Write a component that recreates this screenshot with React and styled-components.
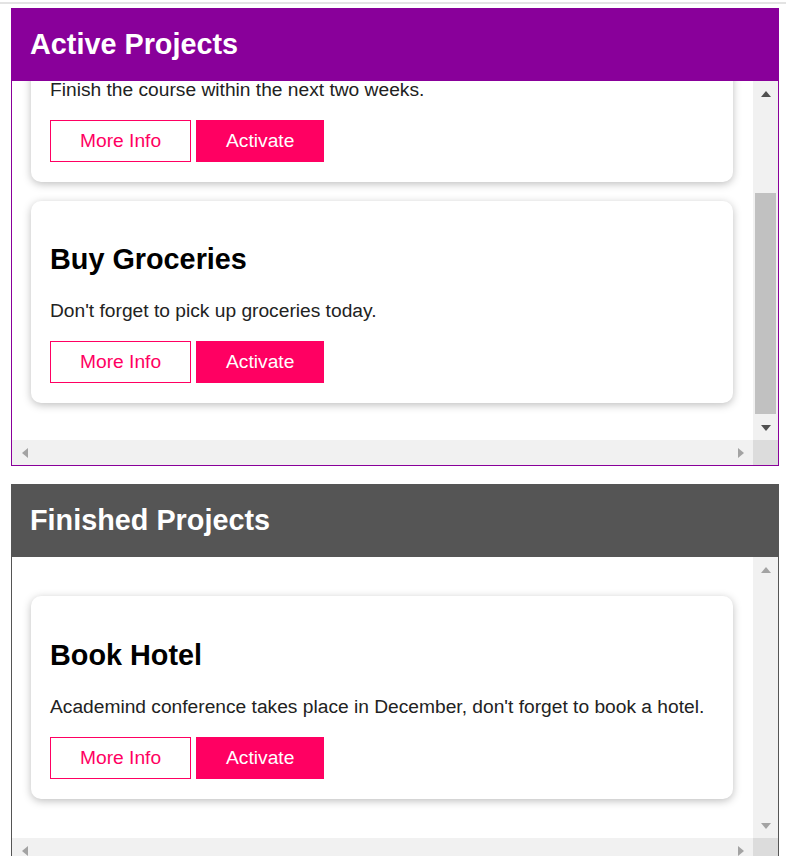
import React, { useLayoutEffect, useRef, useState } from "react";
import styled, { createGlobalStyle } from "styled-components";

const PINK = "#ff0062";

const projects = {
  active: [
    {
      id: "p1",
      title: "Finish the Course",
      description: "Finish the course within the next two weeks.",
    },
    {
      id: "p2",
      title: "Buy Groceries",
      description: "Don't forget to pick up groceries today.",
    },
  ],
  finished: [
    {
      id: "p3",
      title: "Book Hotel",
      description:
        "Academind conference takes place in December, don't forget to book a hotel.",
    },
  ],
};

const App = () => (
  <Page>
    <GlobalStyle />
    <TopRule />
    <ProjectSection
      title="Active Projects"
      color="#89009a"
      items={projects.active}
      viewHeight={359}
      scrollTo={141}
    />
    <ProjectSection
      title="Finished Projects"
      color="#555555"
      items={projects.finished}
      viewHeight={281}
      scrollTo={0}
    />
  </Page>
);

const ProjectSection = ({ title, color, items, viewHeight, scrollTo }) => {
  const viewRef = useRef(null);
  const [thumb, setThumb] = useState(null);

  useLayoutEffect(() => {
    const el = viewRef.current;
    if (!el) return;
    el.scrollTop = scrollTo;
    const track = viewHeight - 2 * 25;
    if (el.scrollHeight - el.clientHeight > 4) {
      setThumb({
        size: (el.clientHeight / el.scrollHeight) * track,
        offset: (el.scrollTop / el.scrollHeight) * track,
      });
    } else {
      setThumb(null);
    }
  }, [scrollTo, viewHeight]);

  const canScroll = !!thumb;

  return (
    <Section color={color}>
      <SectionHeader color={color}>
        <h2>{title}</h2>
      </SectionHeader>
      <ScrollFrame viewHeight={viewHeight}>
        <Viewport ref={viewRef}>
          <ProjectList>
            {items.map((p) => (
              <ProjectCard key={p.id}>
                <h2>{p.title}</h2>
                <p>{p.description}</p>
                <Actions>
                  <Button>More Info</Button>
                  <Button primary>Activate</Button>
                </Actions>
              </ProjectCard>
            ))}
          </ProjectList>
        </Viewport>
        <VBar>
          <BarButton>
            <Arrow dir="up" enabled={canScroll} />
          </BarButton>
          <VTrack>
            {thumb && (
              <Thumb
                style={{ height: thumb.size, marginTop: thumb.offset }}
              />
            )}
          </VTrack>
          <BarButton>
            <Arrow dir="down" enabled={canScroll} />
          </BarButton>
        </VBar>
        <HBar>
          <BarButton>
            <Arrow dir="left" />
          </BarButton>
          <BarButton>
            <Arrow dir="right" />
          </BarButton>
        </HBar>
        <Corner />
      </ScrollFrame>
    </Section>
  );
};

const GlobalStyle = createGlobalStyle`
  body {
    margin: 0;
    background: #ffffff;
    font-family: "Liberation Sans", Arial, sans-serif;
  }
  * { box-sizing: border-box; }
`;

const Page = styled.div`
  padding: 2px 7px 0 11px;
  display: flex;
  flex-direction: column;
  gap: 18px;
`;

const TopRule = styled.div`
  height: 2px;
  margin: 0 -7px -14px -11px;
  background: #e3e3e3;
`;

const Section = styled.section`
  border: 1px solid ${({ color }) => color};
  background: #ffffff;
  display: flex;
  flex-direction: column;
`;

const SectionHeader = styled.header`
  background: ${({ color }) => color};
  height: 73px;
  margin: -1px -1px 0;
  padding: 0 19px;
  display: flex;
  align-items: center;

  h2 {
    margin: 0;
    color: #ffffff;
    font-size: 28.8px;
    font-weight: bold;
  }
`;

const ScrollFrame = styled.div`
  display: grid;
  grid-template-columns: 1fr 25px;
  grid-template-rows: ${({ viewHeight }) => `${viewHeight}px`} 25px;
`;

const Viewport = styled.div`
  overflow: hidden;
`;

const ProjectList = styled.ul`
  list-style: none;
  margin: 0;
  padding: 39px 20px 39px 19px;
  display: flex;
  flex-direction: column;
  gap: 19px;
`;

const ProjectCard = styled.li`
  background: #ffffff;
  border-radius: 10px;
  box-shadow: 0 2px 8px rgba(0, 0, 0, 0.26);
  padding: 20px 20px 20px 19px;

  h2 {
    margin: 22.5px 0 24px;
    font-size: 28.8px;
    font-weight: bold;
    color: #000000;
  }

  p {
    margin: 0 0 19px;
    font-size: 19.2px;
    color: #222222;
  }
`;

const Actions = styled.div`
  display: flex;
  gap: 5px;
`;

const Button = styled.button`
  font-family: inherit;
  font-size: 19.2px;
  padding: 9px 29px;
  border: 1px solid ${PINK};
  background: ${({ primary }) => (primary ? PINK : "#ffffff")};
  color: ${({ primary }) => (primary ? "#ffffff" : PINK)};
  cursor: pointer;
  line-height: normal;
`;

const VBar = styled.div`
  background: #f1f1f1;
  display: flex;
  flex-direction: column;
`;

const VTrack = styled.div`
  flex: 1;
  display: flex;
  flex-direction: column;
  padding: 0 2px;
`;

const Thumb = styled.div`
  background: #c1c1c1;
`;

const HBar = styled.div`
  background: #f1f1f1;
  display: flex;
  justify-content: space-between;
`;

const Corner = styled.div`
  background: #dcdcdc;
`;

const BarButton = styled.div`
  width: 25px;
  height: 25px;
  flex: none;
  display: flex;
  align-items: center;
  justify-content: center;
`;

const Arrow = styled.span`
  width: 0;
  height: 0;
  ${({ dir, enabled }) => {
    const c = enabled ? "#505050" : "#a3a3a3";
    if (dir === "up")
      return `border-left: 5.5px solid transparent; border-right: 5.5px solid transparent; border-bottom: 6px solid ${c};`;
    if (dir === "down")
      return `border-left: 5.5px solid transparent; border-right: 5.5px solid transparent; border-top: 6px solid ${c};`;
    if (dir === "left")
      return `border-top: 5.5px solid transparent; border-bottom: 5.5px solid transparent; border-right: 6px solid ${c};`;
    return `border-top: 5.5px solid transparent; border-bottom: 5.5px solid transparent; border-left: 6px solid ${c};`;
  }}
`;

export default App;
